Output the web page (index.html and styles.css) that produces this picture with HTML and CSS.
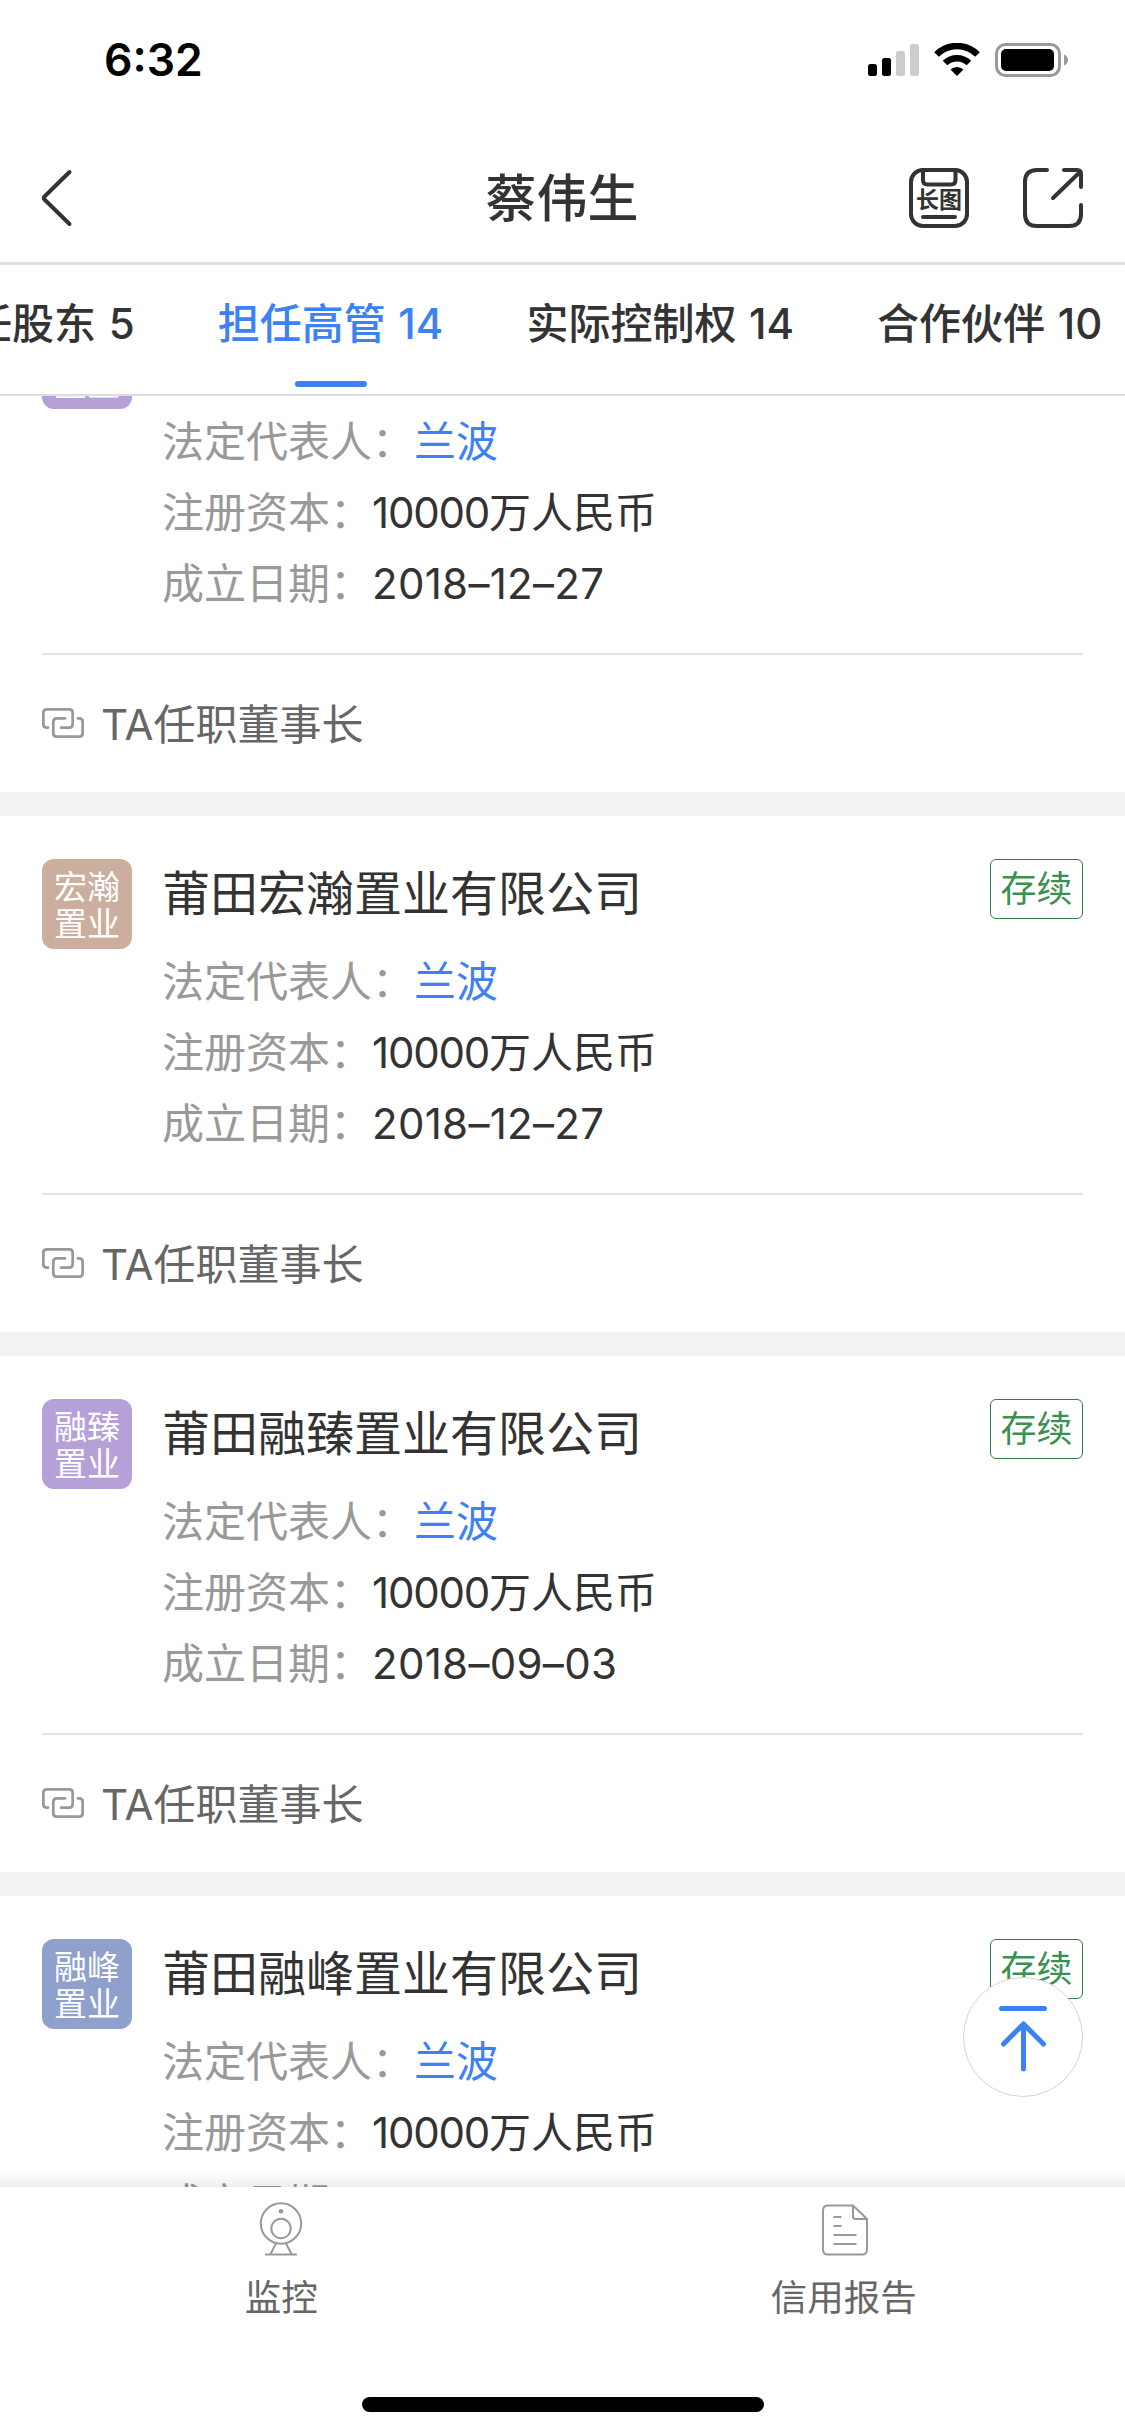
FILE: index.html
```html
<!DOCTYPE html>
<html lang="zh-CN">
<head>
<meta charset="utf-8">
<title>蔡伟生</title>
<link rel="stylesheet" href="styles.css">
</head>
<body>
<svg class="defs" width="0" height="0">
  <symbol id="link" viewBox="0 0 42 30">
    <path d="M6 19.600H5Q1.300 19.600 1.300 16V5Q1.300 1.300 5 1.300H27Q30.700 1.300 30.700 5V16Q30.700 19.600 27 19.600H19M23 10.400H15Q11.300 10.400 11.300 14V25Q11.300 28.700 15 28.700H37Q40.700 28.700 40.700 25V14Q40.700 10.400 37 10.400H36"/>
  </symbol>
</svg>
<div class="screen">
  <div class="status">
    <span class="time">6:32</span>
    <svg class="signals" width="201" height="36" viewBox="0 0 201 36">
      <rect x="0" y="21" width="9" height="12" rx="2.500"/>
      <rect x="14" y="15" width="9" height="18" rx="2.500"/>
      <g fill="#ccc"><rect x="28" y="8" width="9" height="25" rx="2.500"/><rect x="42" y="1" width="9" height="32" rx="2.500"/></g>
      <g fill="none" stroke="#000" stroke-width="6.500"><path d="M68.500 11.500A29 29 0 0 1 109.500 11.500"/><path d="M77 20A17.500 17.500 0 0 1 101 20"/></g>
      <path d="M82.500 26.500A9.500 9.500 0 0 1 95.500 26.500L89 33Z"/>
      <rect x="128.500" y="1.500" width="63" height="31" rx="9" fill="none" stroke="#999" stroke-width="3"/>
      <rect x="133" y="6" width="53" height="22" rx="5"/>
      <path d="M196 11.500Q200 13 200 17T196 22.500Z" fill="#999"/>
    </svg>
  </div>
  <header class="nav">
    <svg class="back" width="34" height="60" viewBox="0 0 34 60"><path d="M28.500 4L3.500 28.500Q2 30 3.500 31.500L28.500 56"/></svg>
    <h1>蔡伟生</h1>
    <div class="actions">
      <div class="shot">
        <svg width="60" height="60" viewBox="0 0 60 60"><rect x="2" y="2" width="56" height="56" rx="12"/><path d="M14 2V12Q14 16.500 18.500 16.500H42Q46.500 16.500 46.500 12V2M14 49H46"/></svg>
        <span>长图</span>
      </div>
      <svg width="60" height="60" viewBox="0 0 60 60"><path d="M24 2H14Q2 2 2 14V46Q2 58 14 58H46Q58 58 58 46V37M41 2H54Q58 2 58 6V19M57 4L30 30"/></svg>
    </div>
  </header>
  <nav class="tabs">
    <span>任股东 5</span><span class="on">担任高管 14</span><span>实际控制权 14</span><span>合作伙伴 10</span>
  </nav>
  <main>
    <div class="list">
      <article>
        <div class="top"><div class="logo purple">置业</div><div class="info"><h2></h2>
          <p><b>法定代表人：</b><a>兰波</a></p><p><b>注册资本：</b><i>10000</i>万人民币</p><p><b>成立日期：</b><time>2018–12–27</time></p></div></div>
        <div class="role"><svg><use href="#link"/></svg><span>TA任职董事长</span></div>
      </article>
      <article>
        <div class="top"><div class="logo tan">宏瀚<br>置业</div><div class="info"><h2>莆田宏瀚置业有限公司</h2>
          <p><b>法定代表人：</b><a>兰波</a></p><p><b>注册资本：</b><i>10000</i>万人民币</p><p><b>成立日期：</b><time>2018–12–27</time></p></div><span class="tag">存续</span></div>
        <div class="role"><svg><use href="#link"/></svg><span>TA任职董事长</span></div>
      </article>
      <article>
        <div class="top"><div class="logo purple">融臻<br>置业</div><div class="info"><h2>莆田融臻置业有限公司</h2>
          <p><b>法定代表人：</b><a>兰波</a></p><p><b>注册资本：</b><i>10000</i>万人民币</p><p><b>成立日期：</b><time>2018–09–03</time></p></div><span class="tag">存续</span></div>
        <div class="role"><svg><use href="#link"/></svg><span>TA任职董事长</span></div>
      </article>
      <article>
        <div class="top"><div class="logo blue">融峰<br>置业</div><div class="info"><h2>莆田融峰置业有限公司</h2>
          <p><b>法定代表人：</b><a>兰波</a></p><p><b>注册资本：</b><i>10000</i>万人民币</p><p><b>成立日期：</b><time>2018–09–03</time></p></div><span class="tag">存续</span></div>
      </article>
    </div>
    <div class="fade"></div>
    <svg class="totop" width="120" height="120" viewBox="0 0 120 120"><circle cx="60" cy="60" r="59.500"/><path d="M38.500 31.500H81.500M60.500 92V47M40.500 67L60.500 47L80.500 67"/></svg>
  </main>
  <footer>
    <div class="acts">
      <div><svg width="60" height="54" viewBox="0 0 60 54"><circle cx="30" cy="21.500" r="20.200"/><circle cx="30" cy="26.500" r="9.700"/><circle class="dot" cx="30" cy="9.300" r="2.300"/><path d="M25 41.500L19.500 52M35 41.500L40.500 52M14 52.500H46"/></svg>监控</div>
      <div><svg width="60" height="54" viewBox="-0.500 1.500 60 54"><path d="M38.500 5H13.500Q8.500 5 8.500 10V49Q8.500 54 13.500 54H47.500Q52.500 54 52.500 49V18.500ZM38.500 5V16Q38.500 18.500 41 18.500H52.500M19 16.500H27M19 25.500H27M19 34.500H42M19 43.500H42"/></svg>信用报告</div>
    </div>
    <div class="home"></div>
  </footer>
</div>
</body>
</html>
```
FILE: styles.css
```css
* { box-sizing: border-box; margin: 0; padding: 0; }
body { background: #fff; }
.defs { display: block; height: 0; }
.screen { width: 1125px; height: 2436px; overflow: hidden; display: flex; flex-direction: column; background: #fff; color: #333; font-family: Inter, "Noto Sans CJK SC", sans-serif; font-size: 42px; }
.status { height: 132px; display: flex; justify-content: space-between; align-items: flex-start; padding: 43px 56px 0 104px; color: #000; }
.time { font-size: 44.5px; font-weight: 600; line-height: 35px; }
.nav { height: 133px; display: flex; align-items: center; justify-content: space-between; padding: 2px 42px 0 42px; border-bottom: 3px solid #e0e0e0; }
.nav svg { display: block; fill: none; stroke: #333; stroke-width: 4; stroke-linecap: round; stroke-linejoin: round; }
.nav .back { margin-right: 140px; margin-left: -1px; }
h1 { font-size: 51px; font-weight: 500; line-height: 60px; padding-top: 1px; }
.actions { display: flex; gap: 54px; }
.shot { position: relative; }
.shot span { position: absolute; left: 0; top: 18px; width: 60px; text-align: center; font-size: 23px; font-weight: 700; line-height: 28px; }
.tabs { height: 131px; flex: none; display: flex; gap: 83px; margin-left: -30px; white-space: nowrap; border-bottom: 2px solid #ddd; }
.tabs span { flex: none; line-height: 118px; height: 129px; position: relative; font-weight: 500; word-spacing: 1.5px; }
.tabs .on { color: #3c82f5; }
.on::after { content: ""; position: absolute; left: 50%; bottom: 7px; width: 72px; height: 6px; margin-left: -36px; border-radius: 3px; background: #3c82f5; }
main { height: 1791px; flex: none; position: relative; overflow: hidden; }
.list { margin-top: -120px; }
article { height: 540px; padding: 43px 42px 0; border-bottom: 24px solid #f2f2f2; }
.top { display: flex; align-items: flex-start; height: 336px; border-bottom: 2px solid #e3e3e3; }
.logo { width: 90px; height: 90px; border-radius: 12px; display: flex; align-items: flex-end; justify-content: center; padding-bottom: 6px; color: #fff; font-size: 33px; line-height: 37px; margin-right: 30px; }
.purple { background: #b5a0d8; }
.tan { background: #cbae9d; }
.blue { background: #8fa0cd; }
.info { flex: 1; padding-top: 1px; }
h2 { font-size: 48px; font-weight: 400; line-height: 68px; height: 86px; }
p { height: 71px; line-height: 71px; }
b { font-weight: inherit; color: #999; }
i { font-style: normal; letter-spacing: -1.2px; }
time { letter-spacing: .3px; }
a { color: #3c82f5; }
.tag { width: 93px; height: 60px; border: 1.5px solid #2f8040; border-radius: 6px; color: #3b9150; font-size: 36px; line-height: 58px; text-align: center; }
.role { height: 136px; display: flex; align-items: center; gap: 17px; color: #666; }
.role span { padding-bottom: 4px; }
.role svg { width: 42px; height: 30px; fill: none; stroke: #999; stroke-width: 2.8; stroke-linecap: round; }
.fade { position: absolute; left: 0; right: 0; bottom: 0; height: 15px; background: linear-gradient(rgba(0,0,0,0), rgba(0,0,0,.07)); }
.totop { position: absolute; right: 42px; top: 1581px; }
.totop circle { fill: #fff; stroke: #d5d5d5; }
.totop path { fill: none; stroke: #3c82f5; stroke-width: 5; stroke-linecap: round; stroke-linejoin: round; }
footer { height: 249px; flex: none; background: #fff; display: flex; flex-direction: column; align-items: center; justify-content: space-between; padding: 15px 0 24px; }
.acts { width: 100%; display: flex; color: #666; font-size: 36.5px; line-height: 52px; }
.acts div { flex: 1; display: flex; flex-direction: column; align-items: center; gap: 16px; }
.acts svg { fill: none; stroke: #999; stroke-width: 2; overflow: visible; }
.acts .dot { fill: #999; stroke: none; }
.home { width: 402px; height: 15px; border-radius: 8px; background: #000; }
```
